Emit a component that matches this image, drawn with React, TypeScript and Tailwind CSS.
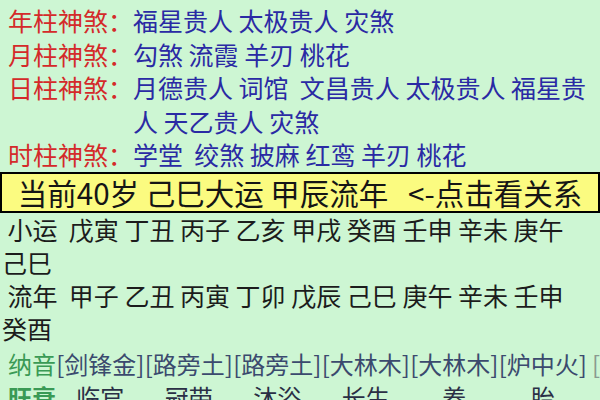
import React from 'react';

const font = "[font-family:'Noto_Sans_CJK_SC','Noto_Sans',sans-serif]";

// 四柱神煞
const shensha = [
  { label: '年柱神煞：', value: '福星贵人 太极贵人 灾煞' },
  { label: '月柱神煞：', value: '勾煞 流霞 羊刃 桃花' },
  { label: '日柱神煞：', value: '月德贵人 词馆  文昌贵人 太极贵人 福星贵人 天乙贵人 灾煞' },
  { label: '时柱神煞：', value: '学堂  绞煞 披麻 红鸾 羊刃 桃花' }
];

const nayin = ['[剑锋金]', '[路旁土]', '[路旁土]', '[大林木]', '[大林木]', '[炉中火]'];
const wangshuai = ['临官', '冠带', '沐浴', '长生', '养', '胎'];

export default function App() {
  return (
    <div className={`w-full h-screen overflow-hidden bg-[#cdf6d3] ${font}`}>
      {/* 神煞 */}
      <div className="pt-1 text-[25px] leading-[33.5px]">
        {shensha.map((row) => (
          <div key={row.label} className="flex">
            <div className="pl-2 whitespace-nowrap text-[#d42a2a]">{row.label}</div>
            <div className="flex-1 whitespace-pre-wrap text-[#2a2aa4]">{row.value}</div>
          </div>
        ))}
      </div>

      {/* 当前大运流年 */}
      <div className="h-[41px] flex items-center justify-center border-2 border-black bg-[#fbfb80] text-[29.5px] text-[#151515] whitespace-pre">
        {'当前40岁 己巳大运 甲辰流年   <-点击看关系'}
      </div>

      {/* 小运 / 流年 */}
      <div className="pl-[2px] pr-[12px] text-[25px] leading-[33px] text-[#1c1c1c] whitespace-pre-wrap">
        <p>{' 小运  戊寅 丁丑 丙子 乙亥 甲戌 癸酉 壬申 辛未 庚午 己巳'}</p>
        <p>{' 流年  甲子 乙丑 丙寅 丁卯 戊辰 己巳 庚午 辛未 壬申 癸酉'}</p>
      </div>

      {/* 纳音 / 旺衰 */}
      <div className="mt-[2px] text-[24px] leading-[33px]">
        <div className="flex whitespace-nowrap">
          <div className="pl-2 w-[56px] shrink-0 text-[#3a9a55]">纳音</div>
          {nayin.map((n, i) => (
            <div key={i} className="w-[88.5px] shrink-0 text-center text-[#3b4a6e]">
              {n}
            </div>
          ))}
          <div className="pl-[5px] shrink-0 text-[#8a9a90]">[覆灯火]</div>
        </div>
        <div className="flex whitespace-nowrap">
          <div className="pl-2 w-[56px] shrink-0 text-[#3a9a55] font-bold">旺衰</div>
          {wangshuai.map((w, i) => (
            <div key={i} className="w-[88.5px] shrink-0 text-center text-[#2a2f45]">
              {w}
            </div>
          ))}
        </div>
      </div>
    </div>
  );
}
